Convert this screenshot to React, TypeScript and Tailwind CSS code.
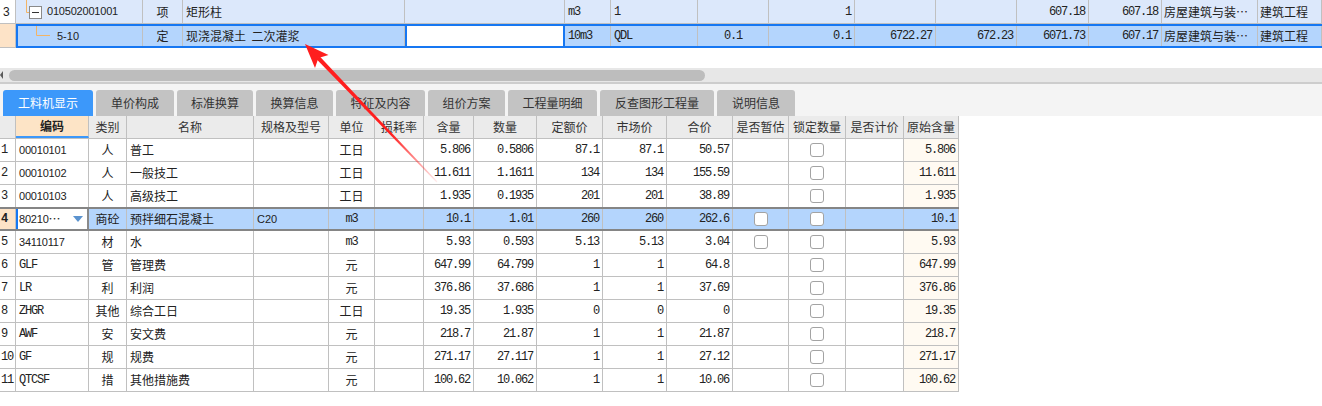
import React from "react";

const MONO = "font-['Liberation_Mono',monospace] tracking-[-1.2px]";
const SANS = "font-['Liberation_Sans',sans-serif]";
const CJK = "font-['Noto_Sans_CJK_SC',sans-serif]";
const TOP_COLS =
  "grid-cols-[16px_127px_40px_222px_160px_46px_87px_71px_86px_81px_81px_72px_73px_96px_64px]";
const TOP_SEL_COLS =
  "grid-cols-[125px_40px_222px_160px_46px_87px_71px_86px_81px_81px_72px_73px_96px_64px]";
const LOW_COLS =
  "grid-cols-[16px_73px_38px_127px_75px_46px_49px_50px_63px_66px_64px_66px_56px_57px_58px_55px]";

type LowRow = {
  code: string;
  type: string;
  name: string;
  spec?: string;
  unit: string;
  vals: [string, string, string, string, string];
  est?: boolean;
  orig: string;
};

const ROWS: LowRow[] = [
  { code: "00010101", type: "人", name: "普工", unit: "工日", vals: ["5.806", "0.5806", "87.1", "87.1", "50.57"], orig: "5.806" },
  { code: "00010102", type: "人", name: "一般技工", unit: "工日", vals: ["11.611", "1.1611", "134", "134", "155.59"], orig: "11.611" },
  { code: "00010103", type: "人", name: "高级技工", unit: "工日", vals: ["1.935", "0.1935", "201", "201", "38.89"], orig: "1.935" },
  { code: "80210", type: "商砼", name: "预拌细石混凝土", spec: "C20", unit: "m3", vals: ["10.1", "1.01", "260", "260", "262.6"], est: true, orig: "10.1" },
  { code: "34110117", type: "材", name: "水", unit: "m3", vals: ["5.93", "0.593", "5.13", "5.13", "3.04"], est: true, orig: "5.93" },
  { code: "GLF", type: "管", name: "管理费", unit: "元", vals: ["647.99", "64.799", "1", "1", "64.8"], orig: "647.99" },
  { code: "LR", type: "利", name: "利润", unit: "元", vals: ["376.86", "37.686", "1", "1", "37.69"], orig: "376.86" },
  { code: "ZHGR", type: "其他", name: "综合工日", unit: "工日", vals: ["19.35", "1.935", "0", "0", "0"], orig: "19.35" },
  { code: "AWF", type: "安", name: "安文费", unit: "元", vals: ["218.7", "21.87", "1", "1", "21.87"], orig: "218.7" },
  { code: "GF", type: "规", name: "规费", unit: "元", vals: ["271.17", "27.117", "1", "1", "27.12"], orig: "271.17" },
  { code: "QTCSF", type: "措", name: "其他措施费", unit: "元", vals: ["100.62", "10.062", "1", "1", "10.06"], orig: "100.62" }
];

const HEADERS = [
  "", "编码", "类别", "名称", "规格及型号", "单位", "损耗率", "含量", "数量",
  "定额价", "市场价", "合价", "是否暂估", "锁定数量", "是否计价", "原始含量"
];

const TABS = [
  { label: "工料机显示", w: "w-[90px]" },
  { label: "单价构成", w: "w-[78px]" },
  { label: "标准换算", w: "w-[76px]" },
  { label: "换算信息", w: "w-[77px]" },
  { label: "特征及内容", w: "w-[89px]" },
  { label: "组价方案", w: "w-[77px]" },
  { label: "工程量明细", w: "w-[89px]" },
  { label: "反查图形工程量", w: "w-[114px]" },
  { label: "说明信息", w: "w-[78px]" }
];

const isAscii = (s: string) => /^[\x00-\x7f]+$/.test(s);

function Check() {
  return (
    <span className="block h-[14px] w-[14px] rounded-[3px] border border-[#a3a3a3] bg-white" />
  );
}

function TopGrid() {
  const cell = "flex items-center border-r border-[#c0c0c0] overflow-hidden whitespace-nowrap";
  return (
    <div>
      {/* parent row: 010502001001 */}
      <div className={`grid ${TOP_COLS} h-[24px] border-b border-[#c0c0c0]`}>
        <div className={`${cell} bg-white pl-[3px] ${SANS} text-[12px]`}>3</div>
        {[...Array(14)].map((_, i) => {
          const base = `${cell} bg-[#dce8fb]`;
          if (i === 0)
            return (
              <div key={i} className={base}>
                <svg width="31" height="23" className="shrink-0">
                  <path d="M10.5 0V12.5H13" stroke="#f2b466" fill="none" />
                  <rect x="13.5" y="6.5" width="12" height="12" fill="#fff" stroke="#8a8a8a" />
                  <path d="M16 12.5H23" stroke="#333" />
                </svg>
                <span className={`${SANS} text-[11px] tracking-[-0.2px]`}>010502001001</span>
              </div>
            );
          if (i === 1) return <div key={i} className={`${base} justify-center`}>项</div>;
          if (i === 2) return <div key={i} className={`${base} pl-[3px]`}>矩形柱</div>;
          if (i === 4) return <div key={i} className={`${base} pl-[3px] ${MONO}`}>m3</div>;
          if (i === 5) return <div key={i} className={`${base} pl-[3px] ${MONO}`}>1</div>;
          if (i === 7) return <div key={i} className={`${base} justify-end pr-[3px] ${MONO}`}>1</div>;
          if (i === 10 || i === 11)
            return <div key={i} className={`${base} justify-end pr-[3px] ${MONO}`}>607.18</div>;
          if (i === 12) return <div key={i} className={`${base} pl-[2px]`}>房屋建筑与装…</div>;
          if (i === 13) return <div key={i} className={`${base} pl-[2px]`}>建筑工程</div>;
          return <div key={i} className={base} />;
        })}
      </div>
      {/* selected child row: 5-10 */}
      <div className="flex h-[24px]">
        <div className="w-[16px] shrink-0 border-r border-b border-[#c0c0c0] bg-[#fde3c7]" />
        <div className={`grid ${TOP_SEL_COLS} flex-1 border-y-2 border-l-2 border-[#1677f2] bg-[#b4d5fd]`}>
          <div className={cell}>
            <svg width="39" height="20" className="shrink-0">
              <path d="M18.5 0V9.5H32" stroke="#f2b466" fill="none" />
            </svg>
            <span className={`${SANS} text-[11px]`}>5-10</span>
          </div>
          <div className={`${cell} justify-center`}>定</div>
          <div className={`${cell} pl-[3px]`}>现浇混凝土&nbsp;&nbsp;二次灌浆</div>
          <div className="border-x-2 border-[#1677f2] bg-white" />
          <div className={`${cell} pl-[3px] ${MONO}`}>10m3</div>
          <div className={`${cell} pl-[3px] ${MONO}`}>QDL</div>
          <div className={`${cell} justify-center ${MONO}`}>0.1</div>
          <div className={`${cell} justify-end pr-[3px] ${MONO}`}>0.1</div>
          <div className={`${cell} justify-end pr-[3px] ${MONO}`}>6722.27</div>
          <div className={`${cell} justify-end pr-[3px] ${MONO}`}>672.23</div>
          <div className={`${cell} justify-end pr-[3px] ${MONO}`}>6071.73</div>
          <div className={`${cell} justify-end pr-[3px] ${MONO}`}>607.17</div>
          <div className={`${cell} pl-[2px]`}>房屋建筑与装…</div>
          <div className={`${cell} pl-[2px]`}>建筑工程</div>
        </div>
      </div>
    </div>
  );
}

function ScrollBar() {
  return (
    <div className="flex h-[16px] items-center border-b-2 border-[#cdcdcd] bg-[#e7e7e7]">
      <svg width="6" height="14" className="shrink-0">
        <path d="M3 3L0 7L3 11Z" fill="#5a5a5a" />
      </svg>
      <div className="ml-[3px] h-[11px] w-[696px] rounded-full bg-[#bdbdbd]" />
    </div>
  );
}

function Tabs() {
  return (
    <div className="flex h-[32px] items-end gap-[3px] bg-[#f4f4f4] pl-[3px]">
      {TABS.map((t, i) => (
        <div
          key={t.label}
          className={`flex h-[26px] ${t.w} items-center justify-center rounded-t-[3px] text-[12px] ${
            i === 0 ? "bg-[#3c98fa] text-white" : "bg-[#c3c3c3] text-[#333]"
          }`}
        >
          {t.label}
        </div>
      ))}
    </div>
  );
}

function LowerTable() {
  const cell = "flex items-center border-r border-[#c0c0c0] overflow-hidden whitespace-nowrap";
  return (
    <div className="w-[959px]">
      <div className={`grid ${LOW_COLS} h-[23px] border-b border-[#c0c0c0] bg-[#ebebeb] text-[#333]`}>
        {HEADERS.map((h, i) => (
          <div
            key={i}
            className={`${cell} justify-center ${
              i === 1 ? "border-b-2 border-b-[#3c98fa] bg-[#fde4c6] font-bold text-[#222]" : ""
            }`}
          >
            {h}
          </div>
        ))}
      </div>
      {ROWS.map((r, idx) => {
        const sel = idx === 3;
        const bg = sel ? "bg-[#b4d5fd]" : "bg-white";
        return (
          <div
            key={idx}
            className={`grid ${LOW_COLS} ${
              sel ? "-mt-px h-[24px] border-y-2 border-[#858585]" : "h-[23px] border-b border-[#c0c0c0]"
            } ${bg}`}
          >
            <div className={`${cell} pl-[1px] ${MONO} ${sel ? "bg-[#fde3c7] font-bold" : ""}`}>
              {idx + 1}
            </div>
            {sel ? (
              <div className="flex items-center border-r-2 border-l-2 border-r-[#8a8a8a] border-l-[#1677f2] bg-white pl-[1px]">
                <span className={`${SANS} text-[11px] tracking-[-0.2px]`}>{r.code}</span>
                <span className="text-[12px]">…</span>
                <svg width="10" height="6" className="ml-auto mr-[4px]">
                  <path d="M0 0H10L5 6Z" fill="#5b93cf" />
                </svg>
              </div>
            ) : (
              <div className={`${cell} pl-[3px] ${/^\d/.test(r.code) ? `${SANS} text-[11px] tracking-[-0.2px]` : MONO}`}>
                {r.code}
              </div>
            )}
            <div className={`${cell} justify-center`}>{r.type}</div>
            <div className={`${cell} pl-[3px]`}>{r.name}</div>
            <div className={`${cell} pl-[3px] ${SANS} text-[11px]`}>{r.spec ?? ""}</div>
            <div className={`${cell} justify-center ${isAscii(r.unit) ? MONO : CJK}`}>{r.unit}</div>
            <div className={cell} />
            {r.vals.map((v, j) => (
              <div key={j} className={`${cell} justify-end pr-[3px] ${MONO}`}>
                {v}
              </div>
            ))}
            <div className={`${cell} justify-center`}>{r.est ? <Check /> : null}</div>
            <div className={`${cell} justify-center`}>
              <Check />
            </div>
            <div className={cell} />
            <div className={`${cell} justify-end pr-[3px] ${MONO} ${sel ? "" : "bg-[#fffaf2]"}`}>
              {r.orig}
            </div>
          </div>
        );
      })}
    </div>
  );
}

function Arrow() {
  return (
    <svg
      width="1322"
      height="406"
      className="pointer-events-none absolute left-0 top-0"
    >
      <defs>
        <linearGradient id="shaft" gradientUnits="userSpaceOnUse" x1="305" y1="44" x2="437" y2="182">
          <stop offset="0" stopColor="#ff1e1e" stopOpacity="1" />
          <stop offset="0.65" stopColor="#ff1e1e" stopOpacity="1" />
          <stop offset="1" stopColor="#ff1e1e" stopOpacity="0.08" />
        </linearGradient>
      </defs>
      <polygon points="316.6,59.3 319.6,56.3 437.4,181.6 436.6,182.4" fill="url(#shaft)" />
      <polygon points="305,44 328.5,55 318.4,58 315,68" fill="#ff1e1e" />
    </svg>
  );
}

export default function App() {
  return (
    <div className={`relative h-[406px] w-[1322px] overflow-hidden bg-white ${CJK} text-[12px] text-[#222]`}>
      <TopGrid />
      <div className="h-[20px]" />
      <ScrollBar />
      <Tabs />
      <LowerTable />
      <Arrow />
    </div>
  );
}
